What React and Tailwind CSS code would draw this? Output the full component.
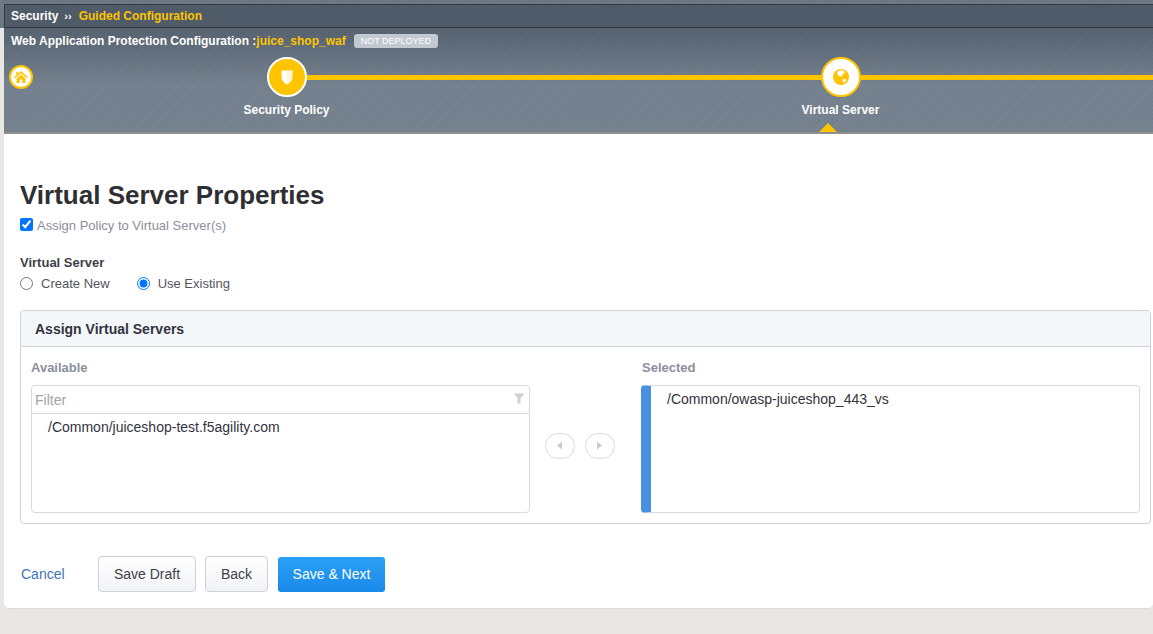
import React from 'react';

const font = "font-['Liberation_Sans',Arial,sans-serif]";

function Step({ label, active, className, children }) {
    return (
        <div className={`flex flex-col items-center w-[120px] ${className}`}>
            <div className={`w-10 h-10 rounded-full border-2 flex items-center justify-center ${active ? 'bg-white border-[#ffc400]' : 'bg-[#ffc400] border-white'}`}>
                {children}
            </div>
            <div className="mt-[6px] pr-[1px] text-xs font-bold text-white leading-[14px]">{label}</div>
        </div>
    );
}

function Header() {
    return (
        <div className="relative h-[134px] ml-[4px] bg-[repeating-linear-gradient(135deg,rgba(255,255,255,0.02)_0px,rgba(255,255,255,0.02)_1px,rgba(0,0,0,0.02)_1px,rgba(0,0,0,0.02)_3px),linear-gradient(180deg,#6c7885_0px,#6c7885_4px,#56626f_28px,#75828f_85px,#76838f_100%)] border-b-2 border-[#8f8f8f]">
            <div className="h-[24px] translate-y-[4px] border border-r-0 border-[#31373d] flex items-center pl-[6px] text-xs font-bold text-white bg-[#4f5b68]">
                <span>Security</span>
                <span className="ml-[6px] text-[11px] leading-none">››</span>
                <span className="ml-[7px] text-[#ffc400]">Guided Configuration</span>
            </div>
            <div className="mt-[9px] pl-[7px] flex items-center text-xs font-bold text-white h-[16px]">
                <span>Web Application Protection Configuration :</span>
                <span className="text-[#ffc400]">juice_shop_waf</span>
                <span className="ml-2 px-[7px] h-[14px] leading-[15px] rounded-[3px] bg-[#c3c9d0] text-[9px] font-normal text-white">NOT DEPLOYED</span>
            </div>
            {/* yellow progress line behind the step circles */}
            <div className="absolute left-[282px] right-0 top-[75px] h-[5px] bg-[#ffc400]"></div>
            <div className="relative flex items-start mt-[8px]">
                <div className="ml-[5px] mt-[8px] w-[24px] h-[24px] rounded-full bg-white border-2 border-[#ffc400] flex items-center justify-center">
                    <svg width="14" height="12" viewBox="0 0 14 12">
                        <path d="M7 0 L14 6.2 L12.6 7 L7 2.2 L1.4 7 L0 6.2 L2.4 4 V1 H4 V2.6 Z" fill="#ffc400" />
                        <path d="M2.6 7.4 L7 3.6 L11.4 7.4 V12 H8.2 V8.6 H5.8 V12 H2.6 Z" fill="#ffc400" />
                    </svg>
                </div>
                <Step label="Security Policy" className="ml-[194px]">
                    <svg width="12" height="15" viewBox="0 0 12 15">
                        <path d="M0.5 0.5 H11.5 V7 C11.5 10.5 9 13 6 14.5 C3 13 0.5 10.5 0.5 7 Z" fill="#fff" />
                        <path d="M6 0.5 H11.5 V7 C11.5 10.5 9 13 6 14.5 Z" fill="#ffe9a3" opacity="0.45" />
                    </svg>
                </Step>
                <Step label="Virtual Server" active className="ml-[434px]">
                    <svg width="16" height="16" viewBox="0 0 16 16">
                        <circle cx="8" cy="8" r="8" fill="#ffc400" />
                        <path d="M4 3 L7.5 1 L11 2 L12 4 L9.5 5 L9.5 7 L7 7.5 L5 6.5 Z" fill="#fff" />
                        <path d="M9.5 10.5 L12.5 10 L13.5 11 L11 14 L10 13 Z" fill="#fff" />
                    </svg>
                </Step>
            </div>
            {/* pointer under the active step */}
            <div className="absolute left-[815px] bottom-0 w-0 h-0 border-x-[9px] border-x-transparent border-b-[9px] border-b-[#ffc400]"></div>
        </div>
    );
}

function ListBox({ children, className }) {
    return <div className={`h-[128px] border border-[#d9d9de] rounded-[4px] bg-white ${className}`}>{children}</div>;
}

function ArrowButton({ dir }) {
    return (
        <button className="w-[30px] h-[26px] rounded-full border border-[#d8dbe2] bg-white flex items-center justify-center">
            <svg width="7" height="9" viewBox="0 0 7 9">
                <path d={dir === 'left' ? 'M6 0.5 V8.5 L1 4.5 Z' : 'M1 0.5 V8.5 L6 4.5 Z'} fill="#c5cbd6" />
            </svg>
        </button>
    );
}

function AssignPanel() {
    return (
        <div className="mt-[18px] mr-[2px] border border-[#d0d0da] rounded-[4px]">
            <div className="h-[36px] pl-[14px] flex items-center bg-[#f3f7fa] border-b border-[#d0d5dc] rounded-t-[4px] text-sm font-bold text-[#33333d]">
                Assign Virtual Servers
            </div>
            <div className="flex pl-[10px] pr-[10px] pt-[13px] pb-[10px]">
                <div className="w-[499px]">
                    <div className="h-[14px] leading-[16px] text-[13px] font-bold text-[#8b8f9d] mb-[11px]">Available</div>
                    <ListBox>
                        <div className="h-[28px] pl-[3px] pr-[3px] border-b border-[#d9d9de] flex items-center justify-between">
                            <span className="text-sm text-[#a3a3a8]">Filter</span>
                            <svg width="12" height="11" viewBox="0 0 12 11" className="mr-[1px] mb-[3px]">
                                <path d="M0.5 0.5 H11.5 L7.5 5 V10.5 H4.5 V5 Z" fill="#d0d0d4" />
                            </svg>
                        </div>
                        <div className="pl-[16px] pt-[5px] text-sm leading-[16px] text-[#33333d]">/Common/juiceshop-test.f5agility.com</div>
                    </ListBox>
                </div>
                <div className="w-[111px] flex items-center justify-center gap-[10px] pt-[18px] pr-[12px]">
                    <ArrowButton dir="left" />
                    <ArrowButton dir="right" />
                </div>
                <div className="flex-1">
                    <div className="ml-[1px] h-[14px] leading-[16px] text-[13px] font-bold text-[#8b8f9d] mb-[11px]">Selected</div>
                    <ListBox className="border-l-[10px] border-l-[#4a90e2] pl-[16px] pt-[5px] text-sm leading-[16px] text-[#33333d]">
                        /Common/owasp-juiceshop_443_vs
                    </ListBox>
                </div>
            </div>
        </div>
    );
}

export default function App() {
    return (
        <div className={`${font} w-[1153px] h-[634px] overflow-hidden bg-[#e9e7e3]`}>
            <div className="h-[28px] -mb-[28px] bg-[#6c7885]"></div>
            <Header />
            <div className="relative ml-[4px] h-[475px] bg-white rounded-b-[5px] border-b border-[#dedcd8] pl-[16px] pt-[46px]">
                <h1 className="text-[26px] font-bold leading-[30px] text-[#2f2f33]">Virtual Server Properties</h1>
                <label className="mt-[8px] flex items-center h-[16px] text-[13px] text-[#8e8e9b]">
                    <input type="checkbox" defaultChecked className="w-[13px] h-[13px] m-0 mr-[4px] -translate-y-[2px] accent-[#0075ff]" />
                    Assign Policy to Virtual Server(s)
                </label>
                <div className="mt-[21px] h-[16px] leading-[16px] text-[13px] font-bold text-[#3f3f48]">Virtual Server</div>
                <div className="mt-[5px] h-[16px] flex items-center text-[13px] text-[#55555f]">
                    <input type="radio" name="vs" className="w-[13px] h-[13px] m-0 -translate-y-[1px] accent-[#0075ff]" />
                    <span className="ml-[8px]">Create New</span>
                    <input type="radio" name="vs" defaultChecked className="w-[13px] h-[13px] m-0 ml-[27px] -translate-y-[1px] accent-[#0075ff]" />
                    <span className="ml-[8px]">Use Existing</span>
                </div>
                <AssignPanel />
                <div className="mt-[32px] flex items-center text-sm">
                    <a className="ml-[1px] w-[77px] text-[#3f74b5]">Cancel</a>
                    <button className="w-[98px] h-[36px] border border-[#cfcfdb] rounded-[4px] bg-gradient-to-b from-white to-[#f2f3f7] text-[#3f3f48]">Save Draft</button>
                    <button className="ml-[9px] w-[63px] h-[36px] border border-[#cfcfdb] rounded-[4px] bg-gradient-to-b from-white to-[#f2f3f7] text-[#3f3f48]">Back</button>
                    <button className="ml-[10px] w-[107px] h-[35px] rounded-[3px] bg-gradient-to-b from-[#2b9ff5] to-[#1a8aea] text-white">Save &amp; Next</button>
                </div>
            </div>
        </div>
    );
}
